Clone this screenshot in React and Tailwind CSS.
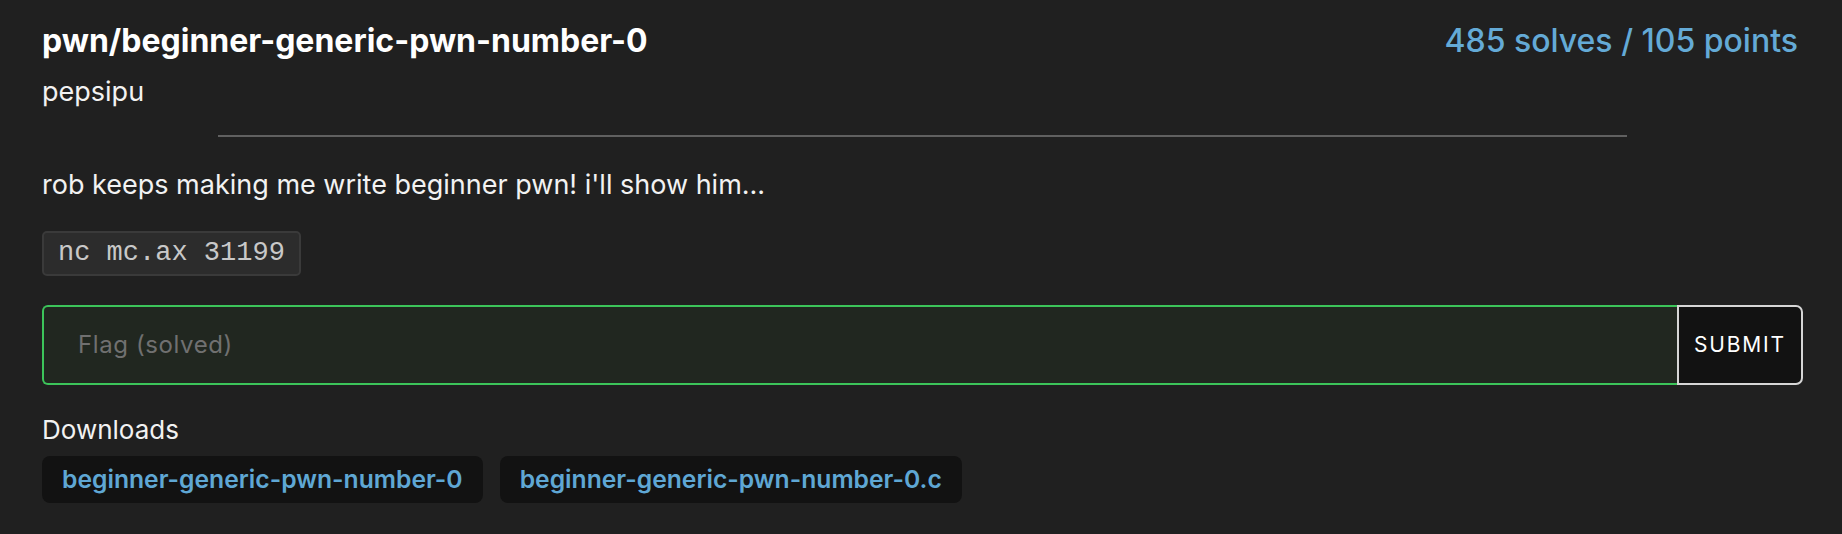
import React from 'react';

const files = ['beginner-generic-pwn-number-0', 'beginner-generic-pwn-number-0.c'];

export default function App() {
  return (
    <div className="min-h-[534px] bg-[#202020] pl-[42px] pr-[39px] pt-[20px] text-[#f2f2f2] font-['Inter',sans-serif]">
      <div className="flex items-start justify-between">
        <div>
          <h1 className="text-[32px] leading-[42px] font-bold text-white">pwn/beginner-generic-pwn-number-0</h1>
          <div className="mt-[12px] text-[27px] leading-[36px]">pepsipu</div>
        </div>
        <div className="text-[32px] leading-[42px] font-medium text-[#64aad6] mr-[5px]">485 solves / 105 points</div>
      </div>

      <hr className="mx-auto mt-[25px] w-[80%] border-0 h-[2px] bg-[#606060]" />

      <p className="mt-[30px] text-[27px] leading-[36px]">rob keeps making me write beginner pwn! i'll show him...</p>

      <div className="mt-[28px]">
        <code className="inline-block rounded-[5px] border-2 border-[#3a3a3a] bg-[#2c2c2c] px-[14px] py-[4px] text-[27px] leading-[33px] text-[#c8c8c8] font-['Liberation_Mono',monospace]">nc mc.ax 31199</code>
      </div>

      <form className="mt-[29px] flex h-[80px]" onSubmit={(e) => e.preventDefault()}>
        <input
          className="flex-1 min-w-0 rounded-l-[6px] border-2 border-r-0 border-[#3cc45a] bg-[#212720] px-[34px] text-[24px] tracking-[0.6px] text-[#e0e0e0] placeholder:text-[#707070] outline-none"
          placeholder="Flag (solved)"
          disabled
        />
        <button className="w-[126px] rounded-r-[7px] border-2 border-[#d6d6d6] bg-[#121212] text-[21px] tracking-[1.8px] text-white">SUBMIT</button>
      </form>

      <div className="mt-[27px] text-[26px] leading-[36px]">Downloads</div>
      <div className="mt-[8px] flex gap-[17px]">
        {files.map((f) => (
          <a key={f} className="rounded-[8px] bg-[#121212] px-[20px] h-[47px] flex items-center text-[24.7px] font-semibold text-[#5fa7d4]">
            {f}
          </a>
        ))}
      </div>
    </div>
  );
}
